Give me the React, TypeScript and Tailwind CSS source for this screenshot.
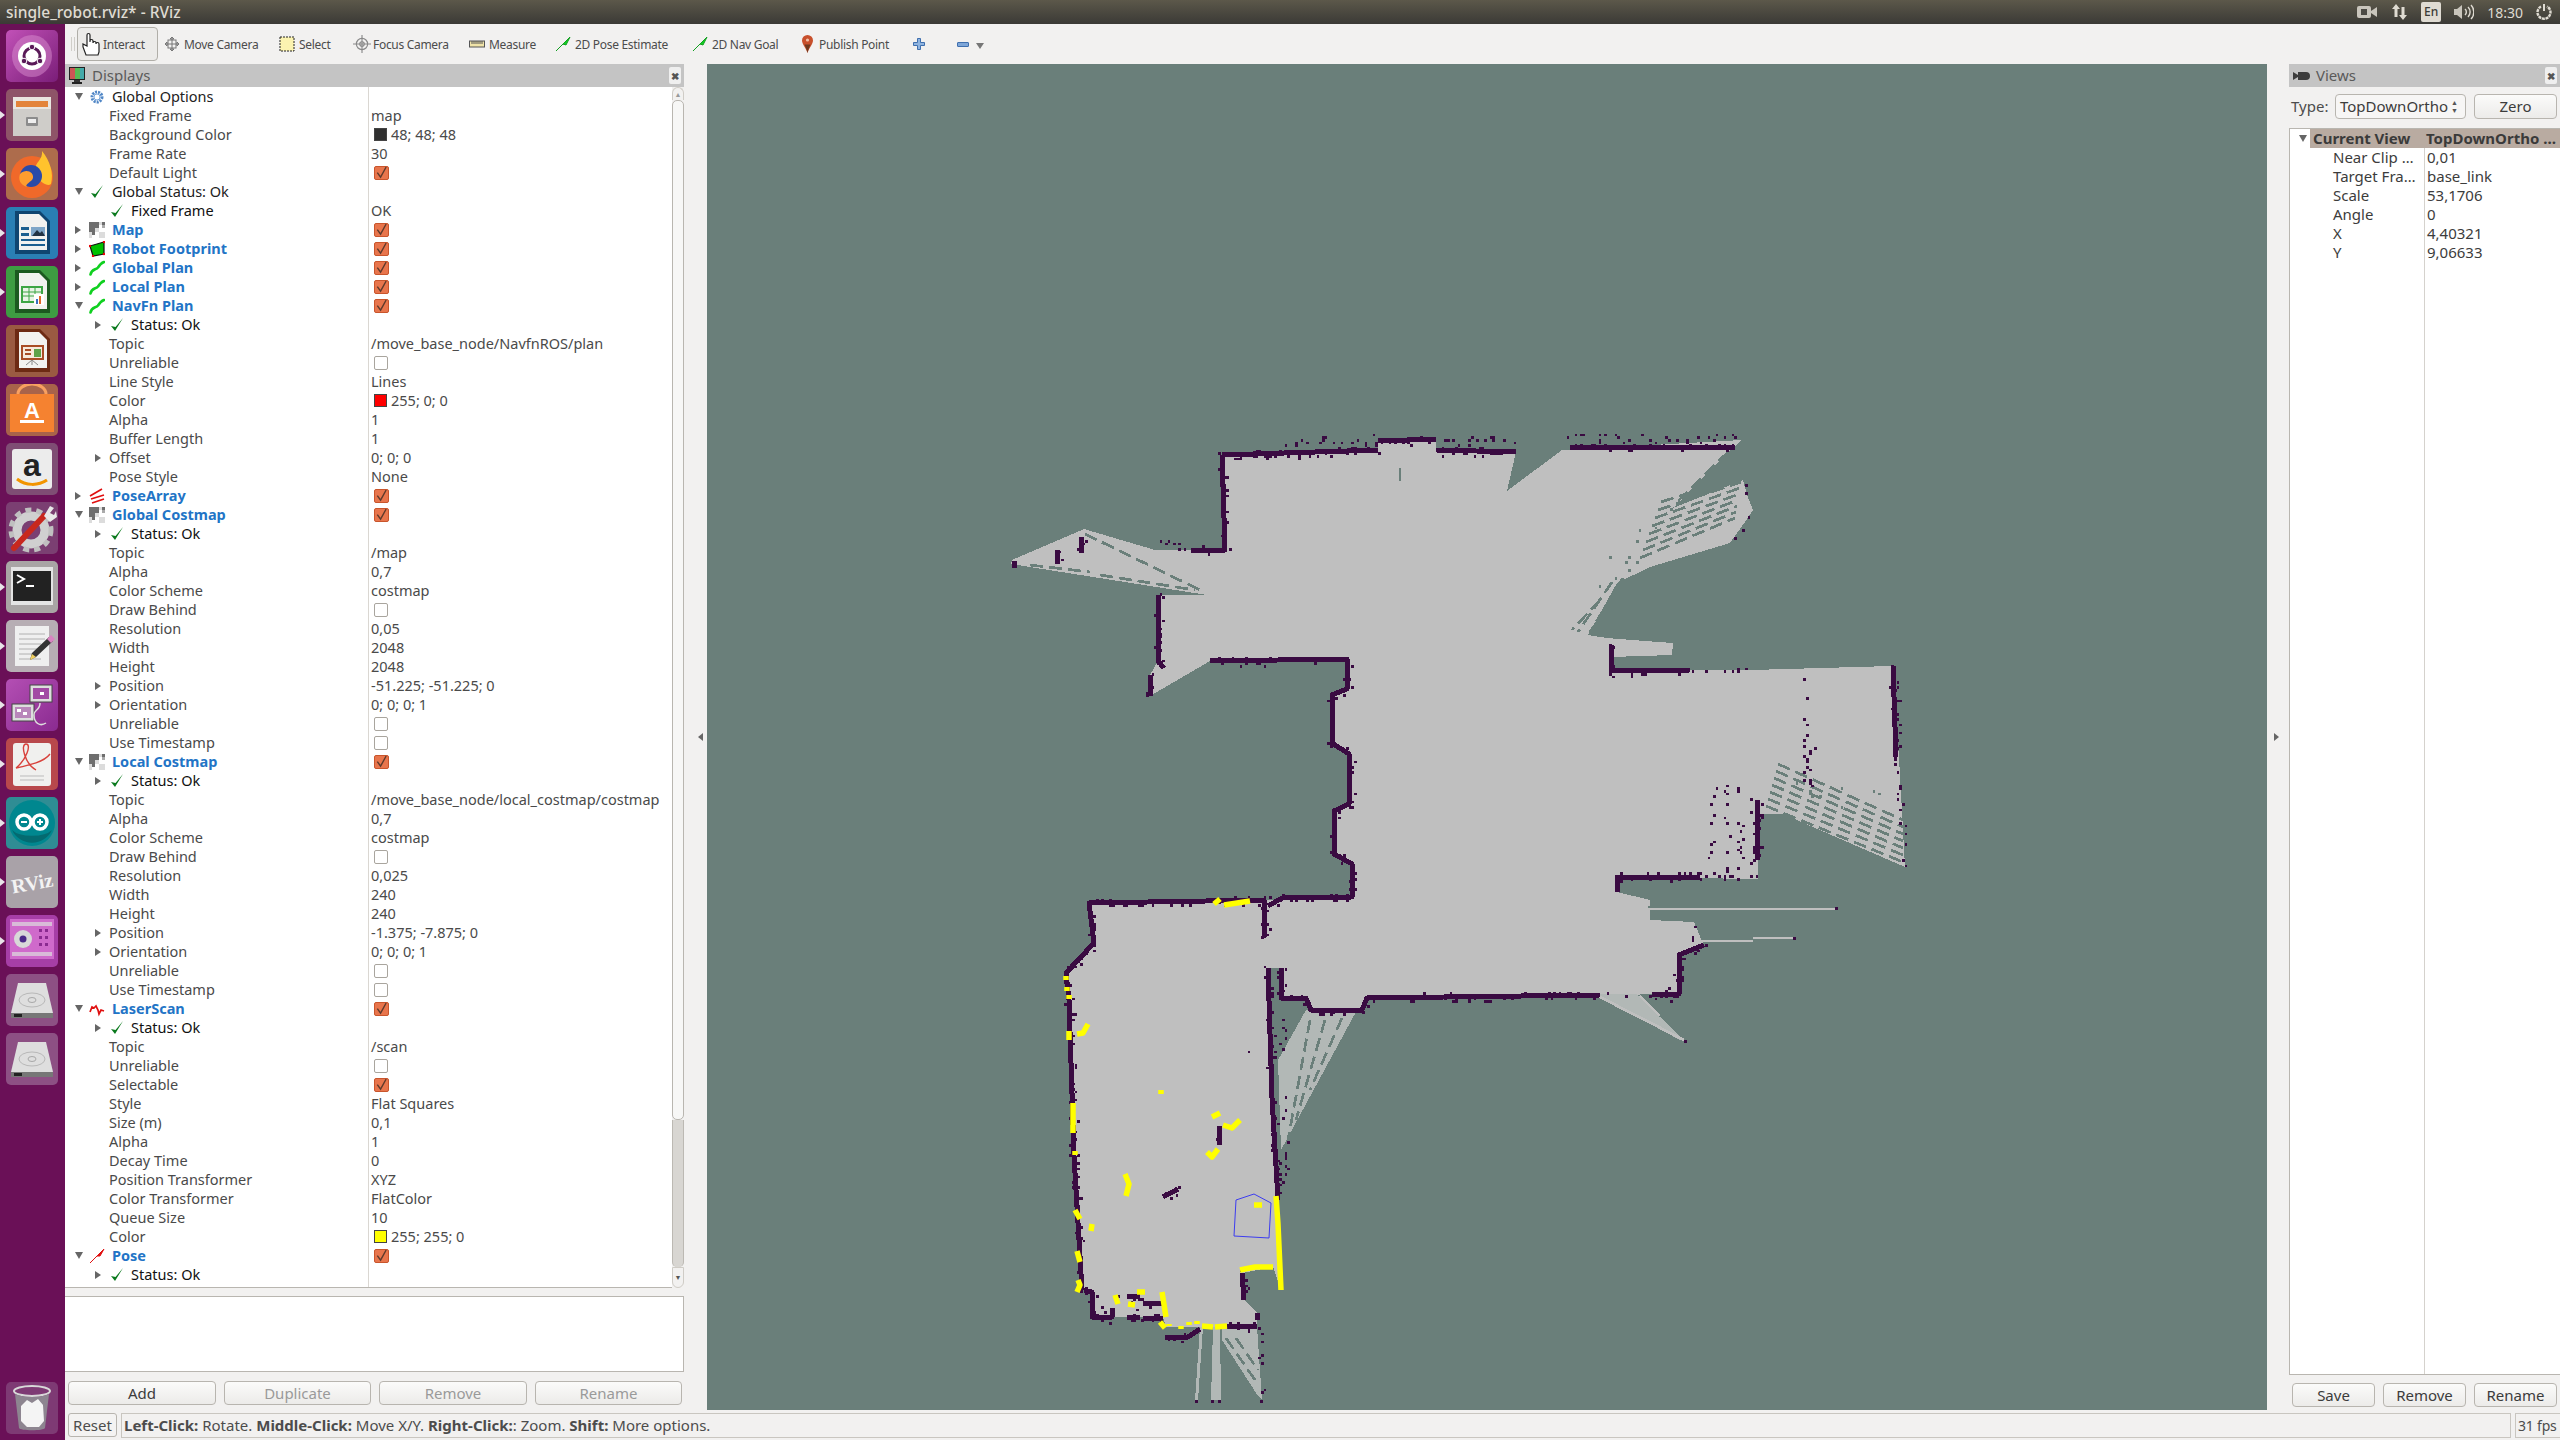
import type { ReactNode } from 'react';

type Pt = [number, number];

// the lower part was read off a squeezed crop, this pulls it back up
const lift = (l: Pt[][]): Pt[][] => l.map((p) => p.map(([x, y]): Pt => [x, y > 880 ? Math.round(y - (y - 880) * 0.012) : y]));

const FLOOR: Pt[] = [
  [1222, 455], [1378, 452], [1378, 440], [1436, 440], [1436, 452], [1516, 452], [1507, 491], [1562, 450], [1742, 440],
  [1673, 508], [1743, 480], [1747, 495], [1753, 510], [1745, 522], [1730, 543], [1650, 567], [1617, 583], [1588, 635],
  [1607, 638], [1632, 640], [1673, 643], [1672, 655], [1611, 657],
  [1611, 671], [1752, 670], [1892, 666], [1899, 757], [1905, 867], [1783, 814], [1758, 814], [1758, 879], [1617, 877], [1617, 892],
  [1650, 900], [1650, 920], [1694, 922], [1704, 946], [1679, 955], [1679, 994], [1367, 998], [1362, 1010], [1311, 1010],
  [1306, 998], [1281, 998], [1281, 968], [1268, 968], [1277, 1196], [1281, 1290], [1273, 1267], [1242, 1273], [1244, 1300],
  [1257, 1313], [1257, 1327], [1166, 1327], [1163, 1317], [1092, 1317], [1092, 1292], [1082, 1290], [1074, 1156], [1069, 1000],
  [1066, 973], [1094, 943], [1089, 903], [1265, 900], [1352, 897], [1352, 864], [1334, 854], [1334, 811], [1349, 804],
  [1349, 754], [1332, 743], [1332, 695], [1347, 689], [1347, 659], [1210, 661], [1150, 696], [1150, 675], [1158, 661],
  [1158, 595], [1207, 595], [1011, 564], [1012, 560], [1084, 529], [1155, 550], [1191, 550], [1225, 550],
];

const FANS: Pt[][] = [
  [[1306, 1010], [1357, 1010], [1281, 1150], [1278, 1060]],
  [[1200, 1327], [1203, 1327], [1198, 1400], [1195, 1400]],
  [[1213, 1327], [1220, 1327], [1221, 1400], [1211, 1400]],
  [[1222, 1327], [1257, 1327], [1262, 1400], [1258, 1396], [1222, 1340]],
  [[1594, 994], [1636, 994], [1684, 1040], [1680, 1040]],
];

const STRIPES: [number, number, number, number][] = [
  ...[0, 1, 2, 3, 4, 5, 6, 7].map((k): [number, number, number, number] => [1640 + 3 * k, 558 - 8 * k, 1735 + k, 518 - 6 * k]),
  [1735, 447, 1680, 503], [1728, 452, 1676, 503], [1623, 578, 1590, 632], [1612, 582, 1578, 632], [1600, 600, 1572, 630],
  ...[0, 1, 2, 3, 4, 5, 6].map((k): [number, number, number, number] => [1766 + 2 * k, 806 - 7 * k, 1903, 862 - 7 * k]),
  [1085, 534, 1200, 590], [1100, 575, 1195, 590], [1030, 565, 1090, 572], [1400, 468, 1400, 485],
  [1648, 907, 1680, 905], [1650, 919, 1690, 916], [1226, 1338, 1255, 1380], [1236, 1338, 1258, 1370],
  [1310, 1020, 1288, 1140], [1325, 1020, 1296, 1120], [1342, 1018, 1310, 1090],
];

const WALLS: Pt[][] = [
  [[1222, 455], [1378, 450]], [[1378, 441], [1436, 439]], [[1436, 450], [1516, 452]], [[1570, 447], [1735, 447]],
  [[1222, 455], [1225, 550], [1191, 550]], [[1158, 595], [1158, 661], [1164, 668]], [[1150, 675], [1150, 696]],
  [[1081, 537], [1081, 553]], [[1057, 550], [1057, 564]], [[1014, 561], [1014, 568]],
  [[1210, 661], [1347, 659], [1347, 689], [1332, 695], [1332, 743], [1349, 754], [1349, 804], [1334, 811], [1334, 854], [1352, 864], [1352, 897], [1282, 898], [1268, 906]],
  [[1265, 900], [1089, 903], [1094, 943], [1066, 973], [1069, 1000], [1074, 1156], [1082, 1290]],
  [[1265, 900], [1264, 938]], [[1268, 968], [1272, 1098], [1278, 1200]],
  [[1281, 968], [1281, 998], [1306, 998], [1311, 1010], [1362, 1010], [1367, 998], [1600, 995]],
  [[1652, 995], [1679, 994], [1679, 955], [1704, 945]],
  [[1611, 645], [1611, 671], [1690, 670]], [[1617, 892], [1617, 877], [1700, 877]],
  [[1084, 1290], [1092, 1292], [1092, 1317], [1112, 1317], [1112, 1308]], [[1127, 1317], [1140, 1317]], [[1143, 1318], [1163, 1318]],
  [[1127, 1296], [1140, 1296]], [[1143, 1303], [1162, 1303]], [[1165, 1337], [1188, 1337], [1200, 1329]], [[1227, 1326], [1257, 1326]],
  [[1242, 1273], [1244, 1300]], [[1257, 1313], [1257, 1320]], [[1219, 1126], [1219, 1145]], [[1163, 1197], [1178, 1189]],
  [[1757, 800], [1757, 860]], [[1893, 666], [1896, 757]],
];

const SPARSE: Pt[][] = [
  [[1896, 757], [1905, 867]], [[1804, 672], [1806, 790]], [[1812, 745], [1808, 790]], [[1745, 482], [1752, 511], [1733, 543]],
  [[1713, 785], [1708, 875]], [[1727, 785], [1727, 877]], [[1740, 785], [1740, 877]], [[1752, 795], [1752, 877]], [[1690, 875], [1757, 877]],
  [[1260, 1327], [1262, 1400]], [[1695, 925], [1665, 996]], [[1155, 540], [1190, 546]], [[1112, 1296], [1125, 1300]],
  [[1130, 1300], [1138, 1316]], [[1143, 1305], [1162, 1316]], [[1100, 1298], [1108, 1316]], [[1281, 1020], [1285, 1185]],
  [[1690, 670], [1752, 668]], [[1240, 1060], [1250, 1050]], [[1616, 670], [1690, 672]], [[1600, 995], [1679, 998]], [[1280, 900], [1350, 897]],
];

const YELLOW: Pt[][] = [
  ...lift([
    [[1214, 904], [1220, 899]], [[1224, 905], [1250, 901]], [[1066, 977], [1066, 981]], [[1067, 988], [1067, 992]], [[1069, 996], [1069, 1000]],
    [[1069, 1033], [1069, 1042]], [[1077, 1036], [1083, 1035], [1088, 1026]], [[1073, 1106], [1073, 1136]], [[1075, 1154], [1075, 1158]],
    [[1161, 1093], [1161, 1097]], [[1212, 1120], [1220, 1116]], [[1223, 1128], [1232, 1131], [1240, 1123]], [[1207, 1155], [1212, 1160], [1218, 1152]],
    [[1125, 1178], [1129, 1188], [1126, 1200]], [[1075, 1214], [1080, 1223]], [[1092, 1228], [1091, 1235]], [[1077, 1255], [1080, 1267]],
    [[1254, 1209], [1262, 1209]],
  ]),
  [[1078, 1280], [1080, 1285], [1077, 1292]], [[1115, 1295], [1118, 1304]], [[1137, 1292], [1145, 1292]], [[1128, 1304], [1135, 1305]],
  [[1162, 1292], [1166, 1317]], [[1160, 1322], [1165, 1328]], [[1169, 1324], [1169, 1326]], [[1181, 1326], [1181, 1329]], [[1189, 1322], [1189, 1325]],
  [[1197, 1321], [1197, 1324]], [[1202, 1326], [1213, 1327]], [[1215, 1327], [1227, 1326]], [[1276, 1196], [1278, 1224], [1281, 1290]], [[1240, 1270], [1255, 1267], [1273, 1267]],
];

function speckles(lines: Pt[][], step: number, odds: number, spread: number, seed: number) {
  let s = seed;
  const rnd = () => {
    s = (s * 16807) % 2147483647;
    return s / 2147483647;
  };
  const out: Pt[] = [];
  for (const line of lines) {
    for (let i = 1; i < line.length; i++) {
      const [ax, ay] = line[i - 1];
      const [bx, by] = line[i];
      const n = Math.max(1, Math.round(Math.hypot(bx - ax, by - ay) / step));
      for (let k = 0; k < n; k++) {
        if (rnd() > odds) continue;
        const x = ax + ((bx - ax) * k) / n + (rnd() - 0.5) * spread;
        const y = ay + ((by - ay) * k) / n + (rnd() - 0.5) * spread;
        out.push([Math.round(x / 2.66) * 2.66, Math.round(y / 2.66) * 2.66]);
      }
    }
  }
  return out;
}

const wallDots = speckles(WALLS, 3, 0.7, 8, 77);
const sparseDots = speckles(SPARSE, 4, 0.5, 6, 1234);
const topNoise = speckles([[[1290, 441], [1378, 441]], [[1436, 441], [1516, 441]], [[1570, 439], [1738, 439]]], 2.7, 0.55, 13, 99);
const tealDots = speckles([[[1620, 560], [1680, 500]], [[1600, 600], [1640, 560]], [[1790, 790], [1880, 800]]], 7, 0.6, 22, 555);

const pts = (p: Pt[]) => p.map((q) => q.join(',')).join(' ');

function MapView() {
  return (
    <svg viewBox="707 64 1560 1346" className="block h-full w-full" shapeRendering="crispEdges">
      <polygon points={pts(FLOOR)} fill="#bfbfbf" />
      {FANS.map((f, i) => (
        <polygon key={i} points={pts(f)} fill="#b2b8b6" />
      ))}
      <g stroke="#6a7f7a" strokeWidth="2.7" strokeDasharray="13 6" fill="none">
        {STRIPES.map(([a, b, c, d], i) => (
          <line key={i} x1={a} y1={b} x2={c} y2={d} />
        ))}
      </g>
      <g fill="#6a7f7a">
        {tealDots.map(([x, y], i) => (
          <rect key={i} x={x} y={y} width="2.7" height="2.7" />
        ))}
      </g>
      <g stroke="#bfbfbf" strokeWidth="2.7" fill="none">
        <line x1="1650" y1="909" x2="1835" y2="909" /><line x1="1700" y1="941" x2="1753" y2="941" /><line x1="1753" y1="938" x2="1793" y2="938" />
        <line x1="1594" y1="994" x2="1684" y2="1040" /><line x1="1640" y1="996" x2="1660" y2="1016" />
      </g>
      <g fill="none" stroke="#3a0b42" strokeWidth="5" strokeLinejoin="round">
        {WALLS.map((w, i) => (
          <polyline key={i} points={pts(w)} />
        ))}
      </g>
      <g fill="#3a0b42">
        {[...wallDots, ...sparseDots, ...topNoise].map(([x, y], i) => (
          <rect key={i} x={x} y={y} width="2.7" height="2.7" />
        ))}
        <rect x="1835" y="907" width="3" height="3" /><rect x="1793" y="937" width="3" height="3" /><rect x="1684" y="1040" width="3" height="3" />
        <rect x="1195" y="1400" width="3" height="3" /><rect x="1211" y="1400" width="3" height="3" /><rect x="1218" y="1400" width="3" height="3" /><rect x="1260" y="1400" width="3" height="3" />
      </g>
      <g fill="none" stroke="#ffff00" strokeWidth="5.5" strokeLinejoin="round" shapeRendering="auto">
        {YELLOW.map((y, i) => (
          <polyline key={i} points={pts(y)} />
        ))}
      </g>
      <polygon points="1236,1200 1254,1194 1271,1203 1269,1238 1234,1236" fill="none" stroke="#3c3cf0" strokeWidth="1" shapeRendering="auto" />
    </svg>
  );
}

const Gear = () => (
  <svg viewBox="0 0 16 16" className="h-4 w-4">
    <circle cx="8" cy="8" r="5" fill="none" stroke="#4f86c6" strokeWidth="3" strokeDasharray="2 1" />
    <circle cx="8" cy="8" r="3" fill="none" stroke="#7aa7dc" strokeWidth="1" />
  </svg>
);
const Check = () => (
  <svg viewBox="0 0 16 16" className="h-4 w-4">
    <path d="M2 9 L6 14 L14 1 L6.5 10 Z" fill="#0b7a1e" />
  </svg>
);
const Grid = () => (
  <svg viewBox="0 0 15 15" className="h-4 w-4" shapeRendering="crispEdges">
    <rect width="15" height="15" fill="#dcdcdc" />
    <path d="M0 0h9v3H0zM12 0h3v3h-3zM0 3h9v3H0zM3 6h3v6H3zM0 6h3v3H0z" fill="#6e6e6e" />
    <path d="M9 3h3v6H9zM6 9h3v3H6zM12 6h3v3h-3zM3 12h6v3H3z" fill="#fff" />
    <path d="M12 3h3v3h-3z" fill="#aaa" />
  </svg>
);
const Footprint = () => (
  <svg viewBox="0 0 16 16" className="h-4 w-4">
    <polygon points="1,5 15,1 15,13 4,15" fill="#00c000" stroke="#111" strokeWidth="1.2" />
    <circle cx="1" cy="5" r="1.2" fill="#e00" /><circle cx="15" cy="1" r="1.2" fill="#e00" /><circle cx="15" cy="13" r="1.2" fill="#e00" /><circle cx="4" cy="15" r="1.2" fill="#e00" />
  </svg>
);
const PlanIcon = () => (
  <svg viewBox="0 0 16 16" className="h-4 w-4">
    <path d="M1.5 14.5 C2.5 9 7 10 9 7.5 C10.5 5 12 3 15 2" fill="none" stroke="#10d020" strokeWidth="2.6" strokeLinecap="round" />
  </svg>
);
const PoseArrayIcon = () => (
  <svg viewBox="0 0 16 16" className="h-4 w-4">
    <path d="M1 8 L13 1M2 11 L15 7M3 15 L15 11" fill="none" stroke="#e01010" strokeWidth="1.7" />
  </svg>
);
const LaserIcon = () => (
  <svg viewBox="0 0 16 16" className="h-4 w-4">
    <path d="M1 11 L3 6 L5 7 L7 5 L9 9 L10 13 L12 9 L15 10" fill="none" stroke="#e01010" strokeWidth="1.7" />
  </svg>
);
const PoseIcon = () => (
  <svg viewBox="0 0 16 16" className="h-4 w-4">
    <path d="M1 15 L15 1 L11 8 L8 8 Z" fill="#e01010" stroke="#e01010" />
  </svg>
);

function Arrow({ open }: { open?: boolean }) {
  return open ? (
    <span className="block h-0 w-0 border-x-[4px] border-t-[7px] border-x-transparent border-t-[#666]" />
  ) : (
    <span className="block h-0 w-0 border-y-[4px] border-l-[6px] border-y-transparent border-l-[#666]" />
  );
}

function Box({ on }: { on?: boolean }) {
  return on ? (
    <span className="ml-[6px] flex h-[14px] w-[15px] items-center justify-center rounded-[2px] border border-[#c9552c] bg-[#e8754c]">
      <svg viewBox="0 0 14 14" className="h-[14px] w-[14px]">
        <path d="M2.5 6.5 L6 11.5 L12 0.5" fill="none" stroke="#5d3a2c" strokeWidth="1.5" />
      </svg>
    </span>
  ) : (
    <span className="ml-[6px] block h-[14px] w-[14px] rounded-[2px] border border-[#a9a59e] bg-white" />
  );
}

function Value({ text, color }: { text: string; color: string }) {
  return (
    <span className="flex items-center">
      <span className={`ml-[6px] mr-[4px] h-[13px] w-[13px] border border-[#444] ${color}`} />
      {text}
    </span>
  );
}

type Row = { left: ReactNode; right?: ReactNode };

const group = (label: string, icon: ReactNode, open?: boolean, on?: boolean, plain?: boolean): Row => ({
  left: (
    <div className="flex items-center pl-[10px]">
      <span className="flex w-[14px] justify-start"><Arrow open={open} /></span>
      <span className="flex w-[23px]">{icon}</span>
      <span className={plain ? 'text-[#222]' : 'font-bold text-[#2274c6]'}>{label}</span>
    </div>
  ),
  right: on === undefined ? undefined : <Box on={on} />,
});
const status = (label = 'Status: Ok', right?: string, arrow = true): Row => ({
  left: (
    <div className="flex items-center pl-[30px] text-[#111]">
      <span className="flex w-[14px]">{arrow && <Arrow />}</span>
      <span className="flex w-[22px]"><Check /></span>
      <span>{label}</span>
    </div>
  ),
  right: right && <span className="pl-[3px]">{right}</span>,
});
const prop = (label: string, right?: ReactNode, arrow?: boolean): Row => ({
  left: (
    <div className="flex items-center pl-[30px]">
      <span className="flex w-[14px]">{arrow && <Arrow />}</span>
      <span>{label}</span>
    </div>
  ),
  right: typeof right === 'string' ? <span className="pl-[3px]">{right}</span> : right,
});

const rows: Row[] = [
  group('Global Options', <Gear />, true, undefined, true),
  prop('Fixed Frame', 'map'),
  prop('Background Color', <Value text="48; 48; 48" color="bg-[#303030]" />),
  prop('Frame Rate', '30'),
  prop('Default Light', <Box on />),
  group('Global Status: Ok', <Check />, true, undefined, true),
  status('Fixed Frame', 'OK', false),
  group('Map', <Grid />, false, true),
  group('Robot Footprint', <Footprint />, false, true),
  group('Global Plan', <PlanIcon />, false, true),
  group('Local Plan', <PlanIcon />, false, true),
  group('NavFn Plan', <PlanIcon />, true, true),
  status(),
  prop('Topic', '/move_base_node/NavfnROS/plan'),
  prop('Unreliable', <Box />),
  prop('Line Style', 'Lines'),
  prop('Color', <Value text="255; 0; 0" color="bg-[#ff0000]" />),
  prop('Alpha', '1'),
  prop('Buffer Length', '1'),
  prop('Offset', '0; 0; 0', true),
  prop('Pose Style', 'None'),
  group('PoseArray', <PoseArrayIcon />, false, true),
  group('Global Costmap', <Grid />, true, true),
  status(),
  prop('Topic', '/map'),
  prop('Alpha', '0,7'),
  prop('Color Scheme', 'costmap'),
  prop('Draw Behind', <Box />),
  prop('Resolution', '0,05'),
  prop('Width', '2048'),
  prop('Height', '2048'),
  prop('Position', '-51.225; -51.225; 0', true),
  prop('Orientation', '0; 0; 0; 1', true),
  prop('Unreliable', <Box />),
  prop('Use Timestamp', <Box />),
  group('Local Costmap', <Grid />, true, true),
  status(),
  prop('Topic', '/move_base_node/local_costmap/costmap'),
  prop('Alpha', '0,7'),
  prop('Color Scheme', 'costmap'),
  prop('Draw Behind', <Box />),
  prop('Resolution', '0,025'),
  prop('Width', '240'),
  prop('Height', '240'),
  prop('Position', '-1.375; -7.875; 0', true),
  prop('Orientation', '0; 0; 0; 1', true),
  prop('Unreliable', <Box />),
  prop('Use Timestamp', <Box />),
  group('LaserScan', <LaserIcon />, true, true),
  status(),
  prop('Topic', '/scan'),
  prop('Unreliable', <Box />),
  prop('Selectable', <Box on />),
  prop('Style', 'Flat Squares'),
  prop('Size (m)', '0,1'),
  prop('Alpha', '1'),
  prop('Decay Time', '0'),
  prop('Position Transformer', 'XYZ'),
  prop('Color Transformer', 'FlatColor'),
  prop('Queue Size', '10'),
  prop('Color', <Value text="255; 255; 0" color="bg-[#ffff00]" />),
  group('Pose', <PoseIcon />, true, true),
  status(),
];

function DockTitle({ title, icon }: { title: string; icon: ReactNode }) {
  return (
    <div className="flex h-[23px] items-center bg-[#c4c4c4] pl-[4px] pr-[3px] text-[15px] text-[#5a5a5a]">
      <span className="mr-[6px] flex w-[17px]">{icon}</span>
      <span className="flex-1">{title}</span>
      <span className="flex h-[17px] w-[12px] items-center justify-center rounded-[2px] bg-[#efefef] text-[10px] font-bold leading-none text-[#555]">✖</span>
    </div>
  );
}

function QtButton({ label, className, off }: { label: string; className: string; off?: boolean }) {
  return (
    <button className={`h-[24px] rounded-[4px] border border-[#b8b5af] bg-gradient-to-b from-[#fbfbfa] to-[#ecebe9] text-[15px] leading-none ${off ? 'text-[#9a9a9a]' : 'text-[#3c3c3c]'} ${className}`}>
      {label}
    </button>
  );
}

const Hand = () => (
  <svg viewBox="0 0 18 24" className="h-[24px] w-[18px]">
    <path d="M5 12V3a1.5 1.5 0 0 1 3 0v7l0-1a1.5 1.5 0 0 1 3 0v2a1.5 1.5 0 0 1 3 0v1a1.5 1.5 0 0 1 3 0v8l-1 3H4l-3-8v-3l4 2z" fill="#fff" stroke="#222" strokeWidth="1.2" />
  </svg>
);
const Move = () => (
  <svg viewBox="0 0 16 16" className="h-4 w-4" fill="none" stroke="#777">
    <path d="M8 1v14M1 8h14M8 1 6 3h4zM8 15l-2-2h4zM1 8l2-2v4zM15 8l-2-2v4z" />
    <rect x="4" y="4" width="8" height="8" />
  </svg>
);
const SelectIcon = () => (
  <svg viewBox="0 0 16 16" className="h-4 w-4">
    <rect x="1" y="1" width="14" height="14" fill="#fbf3b0" stroke="#222" strokeDasharray="2 1" />
  </svg>
);
const Focus = () => (
  <svg viewBox="0 0 16 16" className="h-[18px] w-[18px]" fill="none" stroke="#888">
    <circle cx="8" cy="8" r="5" /><circle cx="8" cy="8" r="2" /><path d="M8 0v16M0 8h16" />
  </svg>
);
const Ruler = () => (
  <svg viewBox="0 0 16 16" className="h-4 w-4">
    <rect x="0.5" y="5" width="15" height="6" fill="#f0e3a8" stroke="#555" />
    <path d="M3 5v3M5 5v3M7 5v3M9 5v3M11 5v3M13 5v3" stroke="#555" />
  </svg>
);
const GreenArrow = () => (
  <svg viewBox="0 0 16 16" className="h-4 w-4">
    <path d="M1 15 L15 1 L11 9 L8 8 Z" fill="#12d020" stroke="#12a020" />
  </svg>
);
const Pin = () => (
  <svg viewBox="0 0 11 18" className="h-[18px] w-[11px]">
    <path d="M5.5 0a5.5 5.5 0 0 1 5.5 5.5C11 9 7 13 5.5 18 4 13 0 9 0 5.5A5.5 5.5 0 0 1 5.5 0z" fill="#c8502c" />
    <path d="M2.5 9.5C4 13 5 15 5.5 18 6 15 7 13 8.5 9.5z" fill="#6e3a20" />
    <circle cx="5.5" cy="5" r="1.6" fill="#f0c0a8" />
  </svg>
);

function Tool({ icon, label, className }: { icon: ReactNode; label: string; className: string }) {
  return (
    <div className={`flex items-center ${className}`}>
      <span className="flex w-[20px]">{icon}</span>
      <span>{label}</span>
    </div>
  );
}

function Toolbar() {
  return (
    <div className="flex h-[40px] items-center bg-[#f2f1f0] pl-[4px] text-[12px] tracking-[-0.3px] text-[#4c4c4c]">
      <span className="ml-[2px] mr-[2px] h-[14px] w-[4px] border-x border-[#d0cec9]" />
      <div className="flex h-[34px] w-[81px] items-center rounded-[4px] border border-[#b0aea8] bg-[#ecebe9] pl-[4px]">
        <Hand />
        <span className="ml-[3px]">Interact</span>
      </div>
      <Tool className="ml-[6px] w-[115px]" icon={<Move />} label="Move Camera" />
      <Tool className="w-[74px]" icon={<SelectIcon />} label="Select" />
      <Tool className="w-[116px]" icon={<Focus />} label="Focus Camera" />
      <Tool className="w-[86px]" icon={<Ruler />} label="Measure" />
      <Tool className="w-[137px]" icon={<GreenArrow />} label="2D Pose Estimate" />
      <Tool className="w-[110px]" icon={<GreenArrow />} label="2D Nav Goal" />
      <div className="flex w-[111px] items-center">
        <span className="flex w-[17px]"><Pin /></span>
        <span>Publish Point</span>
      </div>
      <svg viewBox="0 0 12 12" className="h-[12px] w-[12px]">
        <path d="M4.5.5h3v4h4v3h-4v4h-3v-4h-4v-3h4z" fill="#8fb4e0" stroke="#3f6fae" />
      </svg>
      <span className="ml-[32px] h-[5px] w-[12px] rounded-[1px] border border-[#3f6fae] bg-[#7ea6d8]" />
      <span className="ml-[7px] mt-[4px] h-0 w-0 border-x-[4px] border-t-[6px] border-x-transparent border-t-[#777]" />
    </div>
  );
}

function DisplaysPanel() {
  return (
    <div className="flex w-[619px] flex-col">
      <DockTitle
        title="Displays"
        icon={
          <svg viewBox="0 0 16 18" className="h-[18px] w-[16px]">
            <rect x="0.5" y="0.5" width="15" height="12" fill="#4aa" stroke="#222" />
            <rect x="1" y="1" width="5" height="11" fill="#c55" /><rect x="6" y="1" width="5" height="11" fill="#5b5" />
            <rect x="5" y="13" width="6" height="2" fill="#333" /><rect x="3" y="15" width="10" height="2" fill="#222" />
          </svg>
        }
      />
      <div className="flex h-[1201px]">
        <div className="relative h-full w-[607px] overflow-hidden border-b border-[#b9b6b0] bg-white text-[#4a4a4a]">
          <div className="absolute inset-y-0 left-[303px] w-px bg-[#dad7d2]" />
          {rows.map((r, i) => (
            <div key={i} className="flex h-[19px] items-center">
              <div className="w-[303px] shrink-0">{r.left}</div>
              <div className="pl-[0px]">{r.right}</div>
            </div>
          ))}
        </div>
        <div className="flex w-[12px] flex-col items-center bg-[#f2f1f0]">
          <div className="flex h-[13px] w-full items-center justify-center rounded-t-[6px] border-x border-t border-[#cfccc6] text-[7px] text-[#999]">▲</div>
          <div className="h-[1027px] w-full rounded-[5px] border border-[#b9b6b0] bg-[#f7f7f6]" />
          <div className="h-[148px] w-full rounded-b-[5px] border-x border-[#bcb9b3] bg-[#d8d6d2]" />
          <div className="flex flex-1 w-full items-center justify-center rounded-b-[6px] border border-[#cfccc6] text-[7px] text-[#555]">▼</div>
        </div>
      </div>
      <div className="mt-[8px] h-[76px] border-y border-r border-[#b9b6b0] bg-white" />
      <div className="mt-[9px] flex gap-[8px] pl-[3px]">
        <QtButton label="Add" className="w-[148px]" />
        <QtButton label="Duplicate" className="w-[147px]" off />
        <QtButton label="Remove" className="w-[148px]" off />
        <QtButton label="Rename" className="w-[147px]" off />
      </div>
    </div>
  );
}

function ViewsPanel() {
  const rowsV = [
    ['Near Clip …', '0,01'],
    ['Target Fra…', 'base_link'],
    ['Scale', '53,1706'],
    ['Angle', '0'],
    ['X', '4,40321'],
    ['Y', '9,06633'],
  ];
  return (
    <div className="flex w-[271px] flex-col">
      <DockTitle
        title="Views"
        icon={
          <svg viewBox="0 0 17 10" className="h-[10px] w-[17px]">
            <path d="M0 1l5 3V1h8a4 4 0 0 1 0 8H5V6l-5 3z" fill="#3c3c3c" />
          </svg>
        }
      />
      <div className="mt-[7px] flex h-[25px] items-center pl-[2px] text-[15px]">
        <span className="w-[44px] text-[#4c4c4c]">Type:</span>
        <div className="flex h-[25px] w-[131px] items-center justify-between rounded-[4px] border border-[#b8b5af] bg-[#f7f6f5] pl-[4px] pr-[7px] text-[#3c3c3c]">
          <span>TopDownOrtho</span>
          <span className="text-[7px] leading-[8px] text-[#555]">▲<br />▼</span>
        </div>
        <QtButton label="Zero" className="ml-[8px] !h-[25px] w-[83px]" />
      </div>
      <div className="relative mt-[9px] h-[1247px] border border-r-0 border-[#b9b6b0] bg-white text-[15px] text-[#3c3c3c]">
        <div className="absolute inset-y-0 left-[134px] w-px bg-[#d5d2cd]" />
        <div className="relative flex h-[19px] items-center">
          <span className="ml-[9px] w-[11px]"><Arrow open /></span>
          <div className="flex h-[19px] flex-1 items-center bg-[#b9aba1] font-bold text-[#3a3a3a]">
            <span className="w-[114px] pl-[3px]">Current View</span>
            <span className="pl-[2px]">TopDownOrtho …</span>
          </div>
        </div>
        {rowsV.map(([a, b]) => (
          <div key={a} className="relative flex h-[19px] items-center">
            <span className="w-[134px] pl-[43px]">{a}</span>
            <span className="pl-[3px]">{b}</span>
          </div>
        ))}
      </div>
      <div className="mt-[8px] flex gap-[8px] pl-[3px]">
        <QtButton label="Save" className="w-[83px]" />
        <QtButton label="Remove" className="w-[83px]" />
        <QtButton label="Rename" className="w-[83px]" />
      </div>
    </div>
  );
}

function StatusBar() {
  return (
    <div className="flex h-[30px] items-center gap-[4px] bg-[#f2f1f0] pl-[3px] text-[15px] text-[#4c4c4c]">
      <button className="h-[24px] w-[49px] rounded-[3px] border border-[#b8b5af] bg-[#f4f3f2] leading-none">Reset</button>
      <div className="flex h-[25px] flex-1 items-center border border-[#c9c6c0] pl-[2px]">
        <b>Left-Click:</b>&nbsp;Rotate.&nbsp;<b>Middle-Click:</b>&nbsp;Move X/Y.&nbsp;<b>Right-Click:</b>: Zoom.&nbsp;<b>Shift:</b>&nbsp;More options.
      </div>
      <div className="flex h-[25px] w-[45px] items-center whitespace-nowrap border border-r-0 border-[#c9c6c0] pl-[2px] text-[14px] tracking-[-0.2px]">31 fps</div>
    </div>
  );
}

function Tile({ bg, children, pip }: { bg: string; children: ReactNode; pip?: boolean }) {
  return (
    <div className="relative h-[52px] w-[65px] shrink-0">
      {pip && <span className="absolute left-0 top-[22px] h-0 w-0 border-y-[4px] border-l-[5px] border-y-transparent border-l-[#e8e4e8]" />}
      <div className={`ml-[6px] h-[52px] w-[52px] overflow-hidden rounded-[5px] ${bg}`}>
        <svg viewBox="0 0 52 52" className="h-[52px] w-[52px]">{children}</svg>
      </div>
    </div>
  );
}

const Disk = () => (
  <>
    <path d="M12 9h28l7 30H5z" fill="#dedede" />
    <ellipse cx="26" cy="26" rx="13" ry="7" fill="none" stroke="#b8b8b8" />
    <ellipse cx="26" cy="26" rx="4" ry="2.5" fill="none" stroke="#a8a8a8" />
    <path d="M5 39h42v5H5z" fill="#777" /><path d="M8 40h8v3H8z" fill="#222" />
  </>
);

function Launcher() {
  return (
    <div className="relative flex h-[1416px] w-[65px] shrink-0 flex-col gap-[7px] bg-[#6a1057] pt-[6px]">
      <Tile bg="bg-gradient-to-br from-[#c251b8] to-[#7a1d78]">
        <ellipse cx="26" cy="26" rx="20" ry="21" fill="#d98ed0" opacity=".5" />
        <circle cx="26" cy="26" r="14" fill="#fff" />
        <circle cx="26" cy="26" r="8" fill="none" stroke="#5a1a58" strokeWidth="3" />
        <circle cx="26" cy="17" r="2.8" fill="#5a1a58" stroke="#fff" /><circle cx="18" cy="31" r="2.8" fill="#5a1a58" stroke="#fff" /><circle cx="34" cy="31" r="2.8" fill="#5a1a58" stroke="#fff" />
      </Tile>
      <Tile bg="bg-[#8e5468]" pip>
        <path d="M7 8h38v12H7z" fill="#e9e6e0" /><path d="M10 12h32v6H10z" fill="#e3843a" />
        <path d="M7 20h38v27H7z" fill="#cfcdc9" /><rect x="20" y="28" width="12" height="9" rx="1" fill="#8c8c8c" /><rect x="22" y="30" width="8" height="4" fill="#eee" />
      </Tile>
      <Tile bg="bg-[#ad6c4c]" pip>
        <circle cx="26" cy="29" r="21" fill="#f0692a" /><path d="M36 3c8 10 12 22 9 33-5 4-16-6-16-14 0-8 8-10 7-19z" fill="#ffc32d" />
        <circle cx="25" cy="28" r="11" fill="#2b4aa8" /><path d="M14 26c6-6 14-2 13 4-1 4-9 6-6 9-7-2-9-8-7-13z" fill="#ff9d2e" />
      </Tile>
      <Tile bg="bg-[#2a7fb4]" pip>
        <path d="M9 4h25l10 10v33H9z" fill="#0f4570" /><path d="M13 7h20l8 8v28H13z" fill="#f2f2f0" />
        <path d="M15 20h8v3h-8zM15 26h8v3h-8zM15 32h24v2H15zM15 37h24v2H15z" fill="#1c5f90" /><path d="M25 20h14v9H25z" fill="#7fa6c8" /><path d="M26 29l5-6 3 3 2-2 3 5z" fill="#234" />
      </Tile>
      <Tile bg="bg-[#3e9c42]" pip>
        <path d="M9 4h25l10 10v33H9z" fill="#1c5a20" /><path d="M13 7h20l8 8v28H13z" fill="#f2f2f0" />
        <path d="M15 20h22v17H15z" fill="#3da544" /><path d="M17 22h18v13H17z" fill="#e9f3e6" /><path d="M17 26h18M17 30h18M23 22v13M29 22v13" stroke="#3da544" />
        <path d="M28 28h10v11H28z" fill="#fff" /><path d="M30 33h2v5h-2z" fill="#3b6fc0" /><path d="M33 30h2v8h-2z" fill="#e06a2a" />
      </Tile>
      <Tile bg="bg-[#9a5a42]">
        <path d="M9 4h25l10 10v33H9z" fill="#6d2a14" /><path d="M13 7h20l8 8v28H13z" fill="#f2f2f0" />
        <path d="M15 20h23v15H15z" fill="#a84c26" /><path d="M17 22h19v11H17z" fill="#f7e9dc" /><path d="M19 24h6v2h-6zM19 28h6v2h-6z" fill="#a84c26" /><path d="M28 24h7v8h-7z" fill="#5da24a" />
        <path d="M26 35l-6 5M26 35l6 5M26 35v5" stroke="#888" />
      </Tile>
      <Tile bg="bg-[#a8634a]">
        <path d="M4 10h44v38H4z" fill="#f58230" /><path d="M12 10a14 10 0 0 1 28 0" fill="none" stroke="#f8a060" strokeWidth="3" />
        <text x="26" y="34" textAnchor="middle" fontFamily="Liberation Sans" fontWeight="700" fontSize="22" fill="#fff">A</text>
        <path d="M14 36h24v3H14z" fill="#fff" />
      </Tile>
      <Tile bg="bg-[#7f4d74]">
        <rect x="6" y="6" width="40" height="40" rx="3" fill="#ececec" />
        <text x="26" y="33" textAnchor="middle" fontFamily="Liberation Sans" fontWeight="700" fontSize="32" fill="#222">a</text>
        <path d="M11 36c9 7 21 7 30 1" fill="none" stroke="#f29400" strokeWidth="3" />
      </Tile>
      <Tile bg="bg-[#7b3f72]">
        <circle cx="25" cy="28" r="14" fill="none" stroke="#d0d0d0" strokeWidth="9" />
        <circle cx="25" cy="28" r="20" fill="none" stroke="#c0c0c0" strokeWidth="5" strokeDasharray="6 5" />
        <path d="M8 46 L38 14" stroke="#c8281e" strokeWidth="6" strokeLinecap="round" /><path d="M38 14l6-10 4 2-4 5 4 2 2-4 1 6-7 5z" fill="#e8e8e8" />
      </Tile>
      <Tile bg="bg-[#a9a5a5]" pip>
        <rect x="5" y="6" width="42" height="38" fill="#e4e4e4" /><rect x="7" y="10" width="38" height="30" fill="#222" />
        <path d="M11 14l7 4-7 4" fill="none" stroke="#fff" strokeWidth="2" /><path d="M20 24h8v2h-8z" fill="#fff" />
      </Tile>
      <Tile bg="bg-[#b7aeb4]" pip>
        <path d="M9 6h34v40H9z" fill="#efefef" /><path d="M13 14h26M13 19h26M13 24h22M13 29h18M13 34h16M13 39h22" stroke="#b0b0b0" />
        <path d="M24 40l2-7 17-16 4 4-17 16z" fill="#333" /><path d="M41 19l4-4 4 4-4 4z" fill="#d884c0" /><path d="M24 40l2-6 4 3z" fill="#f0d060" />
      </Tile>
      <Tile bg="bg-gradient-to-br from-[#b44fb4] to-[#8a2a90]" pip>
        <rect x="24" y="6" width="22" height="17" fill="#ddd" stroke="#444" /><rect x="27" y="9" width="16" height="11" fill="#a24aa4" /><path d="M34 13h4v3h-4z" fill="#fff" />
        <rect x="6" y="25" width="22" height="17" fill="#ddd" stroke="#444" /><rect x="9" y="28" width="16" height="11" fill="#b986ba" /><path d="M11 30h4v3h-4zM17 33h4v3h-4z" fill="#fff" />
        <path d="M34 24c0 8-6 6-6 12 0 8 6 12 12 8" fill="none" stroke="#ddd" strokeWidth="1.5" />
      </Tile>
      <Tile bg="bg-[#b8484c]" pip>
        <rect x="7" y="5" width="38" height="43" rx="3" fill="#f0f0ee" />
        <path d="M10 30c14-3 28-6 34-14M10 30c10-8 16-24 10-24-6 0-1 20 10 26" fill="none" stroke="#d8423c" strokeWidth="1.4" />
        <path d="M14 38h24M14 42h24" stroke="#bbb" />
      </Tile>
      <Tile bg="bg-[#2f8d94]" pip>
        <circle cx="26" cy="26" r="23" fill="#00878f" /><path d="M6 33a22 22 0 0 0 40 0 22 10 0 0 1-40 0z" fill="#046a70" />
        <circle cx="18" cy="25" r="7" fill="none" stroke="#fff" strokeWidth="3.5" /><circle cx="34" cy="25" r="7" fill="none" stroke="#fff" strokeWidth="3.5" />
        <path d="M15 25h6M31 25h6M34 22v6" stroke="#fff" strokeWidth="2" />
      </Tile>
      <Tile bg="bg-[#a9a2a8]" pip>
        <text x="26" y="34" textAnchor="middle" fontFamily="Liberation Serif" fontWeight="700" fontSize="20" fill="#f3f3f3" transform="rotate(-10 26 26)">RViz</text>
      </Tile>
      <Tile bg="bg-[#a63ea6]" pip>
        <rect x="4" y="4" width="44" height="40" fill="#cf6acb" /><path d="M6 7h40v4H6zM6 37h40v4H6z" fill="#ddd" opacity=".7" />
        <circle cx="17" cy="24" r="9" fill="#d8d8d8" /><circle cx="17" cy="24" r="3.5" fill="#4b2a88" />
        <path d="M33 14h3v3h-3zM39 14h3v3h-3zM33 21h3v3h-3zM39 21h3v3h-3zM33 28h3v3h-3zM39 28h3v3h-3z" fill="#8a2a90" />
      </Tile>
      <Tile bg="bg-[#8d5084]"><Disk /></Tile>
      <Tile bg="bg-[#8d5084]"><Disk /></Tile>
      <div className="mt-auto mb-[6px]">
        <Tile bg="bg-[#7e3a74]">
          <ellipse cx="26" cy="9" rx="18" ry="5" fill="none" stroke="#d8d8d8" strokeWidth="2" />
          <path d="M9 12l4 34c1 3 25 3 26 0l4-34c-8 4-26 4-34 0z" fill="#8d8590" />
          <path d="M15 24l6-6 5 3 6-4 5 6 1 16-5 6-12 0-6-6z" fill="#f4f4f4" />
        </Tile>
      </div>
    </div>
  );
}

function TopBar() {
  return (
    <div className="flex h-[24px] items-center bg-gradient-to-b from-[#5c584a] to-[#3b3a36] pl-[6px] pr-[8px] text-[15.5px] font-medium text-[#dfdbd2]">
      <span className="flex-1">single_robot.rviz* - RViz</span>
      <svg viewBox="0 0 20 14" className="mr-[14px] h-[14px] w-[20px]">
        <rect x="0" y="1" width="14" height="12" rx="2" fill="#c9c5bc" /><rect x="4" y="4" width="6" height="6" fill="#4c4a44" /><path d="M14 6l6-4v10l-6-4z" fill="#c9c5bc" />
      </svg>
      <svg viewBox="0 0 17 16" className="mr-[13px] h-[16px] w-[17px]">
        <path d="M5 0l4 5H6.5v8h-3V5H1zM12 16l4-5h-2.5V3h-3v8H8z" fill="#dfdbd2" />
      </svg>
      <span className="mr-[13px] flex h-[20px] w-[20px] items-center justify-center rounded-[2px] bg-[#dfdbd2] text-[12px] leading-none text-[#3c3b37]">En</span>
      <svg viewBox="0 0 20 16" className="mr-[13px] h-[16px] w-[20px]">
        <path d="M0 5h3l5-4v14l-5-4H0z" fill="#c9c5bc" /><path d="M11 5a4 4 0 0 1 0 6M14 3a7 7 0 0 1 0 10M17 1a10 10 0 0 1 0 14" fill="none" stroke="#dfdbd2" strokeWidth="1.4" />
      </svg>
      <span className="mr-[13px] text-[14px] font-normal">18:30</span>
      <svg viewBox="0 0 16 16" className="h-[16px] w-[16px]">
        <path d="M5 2.5a6.5 6.5 0 1 0 6 0" fill="none" stroke="#dfdbd2" strokeWidth="2.4" strokeDasharray="3 0.7" /><path d="M8 0v7" stroke="#dfdbd2" strokeWidth="2" />
      </svg>
    </div>
  );
}

export default function App() {
  return (
    <div className="h-[1440px] w-[2560px] overflow-hidden bg-[#f2f1f0] font-['Noto_Sans','Liberation_Sans',sans-serif] text-[14.5px] leading-[19px]">
      <TopBar />
      <div className="flex">
        <Launcher />
        <div className="flex min-w-0 flex-1 flex-col">
          <Toolbar />
          <div className="flex h-[1346px]">
            <DisplaysPanel />
            <div className="flex w-[23px] items-center justify-end pr-[4px]">
              <span className="h-0 w-0 border-y-[4px] border-r-[5px] border-y-transparent border-r-[#666]" />
            </div>
            <div className="h-full w-[1560px] bg-[#6a7f7a]">
              <MapView />
            </div>
            <div className="flex w-[22px] items-center pl-[7px]">
              <span className="h-0 w-0 border-y-[4px] border-l-[5px] border-y-transparent border-l-[#666]" />
            </div>
            <ViewsPanel />
          </div>
          <StatusBar />
        </div>
      </div>
    </div>
  );
}
